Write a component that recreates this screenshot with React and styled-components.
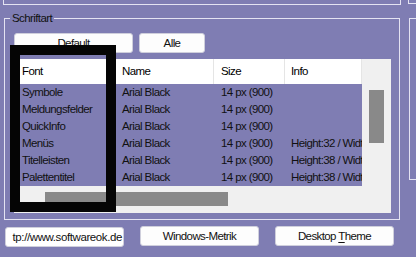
import React from "react";
import styled, { createGlobalStyle } from "styled-components";

const PURPLE = "#7f7db3";
const LINE = "#e4e3f2";

const GlobalStyle = createGlobalStyle`
  html, body {
    margin: 0;
    padding: 0;
    background: ${PURPLE};
  }
  body {
    font-family: "Liberation Sans", Arial, sans-serif;
    font-size: 11.5px;
    letter-spacing: -0.6px;
    color: #111;
  }
`;

const Page = styled.div`
  position: relative;
  width: 416px;
  height: 257px;
  overflow: hidden;
  background: ${PURPLE};
`;

const TopStrip = styled.div`
  display: flex;
  height: 5px;
`;

const TopBox = styled.div`
  box-sizing: border-box;
  margin-left: ${(p) => p.$left}px;
  width: ${(p) => (p.$width ? `${p.$width}px` : "auto")};
  flex: ${(p) => (p.$width ? "none" : "1")};
  height: ${(p) => p.$height}px;
  border: 1px solid ${LINE};
  border-top: none;
  margin-right: ${(p) => (p.$width ? 0 : -10)}px;
`;

const MainRow = styled.div`
  display: flex;
  align-items: flex-start;
  margin-top: 6px;
`;

const Group = styled.fieldset`
  box-sizing: border-box;
  width: 396px;
  margin: 0 0 0 4px;
  padding: 7px 7px 6px 9px;
  border: 1px solid ${LINE};
  min-inline-size: 0;
`;

const Legend = styled.legend`
  padding: 0 2px;
  margin-left: -4px;
  line-height: 15px;
  color: #111;
`;

const SideGroup = styled.div`
  box-sizing: border-box;
  flex: 1;
  margin: 7px -10px 0 9px;
  height: 162px;
  border: 1px solid ${LINE};
`;

const ButtonRow = styled.div`
  display: flex;
  gap: 6px;
`;

const Button = styled.button`
  box-sizing: border-box;
  width: ${(p) => p.$w}px;
  height: 20px;
  margin: 0;
  padding: 0;
  border: 1px solid #cfcfdc;
  border-radius: 3px;
  background: #fdfdfd;
  font: inherit;
  letter-spacing: inherit;
  color: #111;
  line-height: 18px;
  text-align: center;
  u {
    text-decoration: underline;
    text-underline-offset: 2px;
  }
`;

const ListView = styled.div`
  margin-top: 6px;
  width: 377px;
  height: 154px;
  display: grid;
  grid-template-columns: 348px 1fr;
  grid-template-rows: 127px 1fr;
  background: #f0f0f0;
`;

const Table = styled.div`
  overflow: hidden;
`;

const HeaderRow = styled.div`
  display: grid;
  grid-template-columns: 102px 98px 71px 1fr;
  height: 25px;
  background: #fff;
`;

const HeaderCell = styled.div`
  padding-left: ${(p) => p.$pad || 7}px;
  line-height: 25px;
  border-right: 1px solid #e5e5e5;
  white-space: nowrap;
  overflow: hidden;
  color: #000;
`;

const Row = styled.div`
  display: grid;
  grid-template-columns: 102px 98px 71px 1fr;
  height: 17px;
  background: ${PURPLE};
`;

const Cell = styled.div`
  padding-left: ${(p) => p.$pad || 7}px;
  line-height: 17px;
  white-space: nowrap;
  overflow: hidden;
`;

const VScroll = styled.div`
  grid-row: 1 / 3;
  grid-column: 2;
  padding: 31px 7px 0 7px;
`;

const VThumb = styled.div`
  width: 15px;
  height: 53px;
  background: #898989;
`;

const HScroll = styled.div`
  padding: 6px 0 0 31px;
`;

const HThumb = styled.div`
  width: 183px;
  height: 14px;
  background: #898989;
`;

const BottomRow = styled.div`
  display: flex;
  align-items: flex-start;
  margin-top: 6px;
  padding-left: 5px;
  gap: 16px;
`;

const UrlField = styled.div`
  box-sizing: border-box;
  display: flex;
  justify-content: flex-end;
  width: 119px;
  height: 20px;
  margin-top: 1px;
  padding-right: 1px;
  border: 1px solid #cfcfdc;
  border-radius: 3px;
  background: #fff;
  line-height: 18px;
  white-space: nowrap;
  overflow: hidden;
  letter-spacing: -0.4px;
`;

const Highlight = styled.div`
  position: absolute;
  left: 10px;
  top: 45px;
  width: 106px;
  height: 167px;
  box-sizing: border-box;
  border: 10px solid #050505;
  pointer-events: none;
`;

const rows = [
  ["Symbole", "Arial Black", "14 px (900)", ""],
  ["Meldungsfelder", "Arial Black", "14 px (900)", ""],
  ["QuickInfo", "Arial Black", "14 px (900)", ""],
  ["Menüs", "Arial Black", "14 px (900)", "Height:32 / Width:32"],
  ["Titelleisten", "Arial Black", "14 px (900)", "Height:38 / Width:38"],
  ["Palettentitel", "Arial Black", "14 px (900)", "Height:38 / Width:38"],
];

export default function App() {
  return (
    <Page>
      <GlobalStyle />
      <TopStrip>
        <TopBox $left={3} $width={398} $height={5} />
        <TopBox $left={7} $height={4} />
      </TopStrip>
      <MainRow>
        <Group>
          <Legend>Schriftart</Legend>
          <ButtonRow>
            <Button $w={119}>Default</Button>
            <Button $w={66}>Alle</Button>
          </ButtonRow>
          <ListView>
            <Table>
              <HeaderRow>
                <HeaderCell $pad={8}>Font</HeaderCell>
                <HeaderCell $pad={6}>Name</HeaderCell>
                <HeaderCell>Size</HeaderCell>
                <HeaderCell $pad={6}>Info</HeaderCell>
              </HeaderRow>
              {rows.map((r) => (
                <Row key={r[0]}>
                  <Cell $pad={8}>{r[0]}</Cell>
                  <Cell $pad={6}>{r[1]}</Cell>
                  <Cell>{r[2]}</Cell>
                  <Cell $pad={6}>{r[3]}</Cell>
                </Row>
              ))}
            </Table>
            <VScroll>
              <VThumb />
            </VScroll>
            <HScroll>
              <HThumb />
            </HScroll>
          </ListView>
        </Group>
        <SideGroup />
      </MainRow>
      <BottomRow>
        <UrlField>tp://www.softwareok.de</UrlField>
        <Button $w={119}>Windows-Metrik</Button>
        <Button $w={119}>
          Desktop <u>T</u>heme
        </Button>
      </BottomRow>
      <Highlight />
    </Page>
  );
}
